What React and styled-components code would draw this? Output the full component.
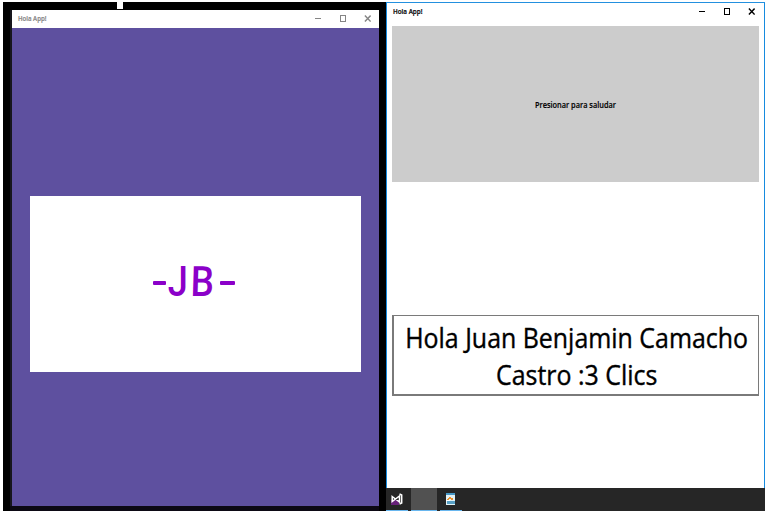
import React from "react";
import styled, { createGlobalStyle } from "styled-components";

const GlobalStyle = createGlobalStyle`
  * { box-sizing: border-box; }
  body { margin: 0; background: #fff; overflow: hidden; font-family: "Open Sans", "Noto Sans", sans-serif; }
  svg { display: block; }
`;

const Screen = styled.main`
  display: flex;
  width: 767px;
  height: 513px;
  padding: 2px 2px 2px 3px;
  background: #fff;
`;

const Desktop = styled.section`
  display: flex;
  flex-direction: column;
  width: 383px;
  height: 509px;
  padding-right: 7px;
  background: #000;
`;

const TopEdge = styled.div`
  flex: 0 0 8px;
  padding-left: 114px;
`;

const Handle = styled.div`
  width: 6px;
  height: 7px;
  background: #fff;
`;

const SplashWindow = styled.div`
  display: flex;
  flex-direction: column;
  flex: 0 0 496px;
  margin-left: 7px;
  border-left: 2px solid #17161d;
`;

const TitleBar = styled.header`
  display: flex;
  align-items: center;
  justify-content: space-between;
  flex: 0 0 ${(p) => p.$height}px;
  padding: 0 ${(p) => p.$right}px 0 ${(p) => p.$left}px;
  background: #fff;
  color: ${(p) => p.$color};
`;

const Label = styled.span`
  display: inline-block;
  font-size: ${(p) => p.$size}px;
  font-weight: ${(p) => p.$weight || 400};
  line-height: ${(p) => p.$line || 12}px;
  white-space: nowrap;
  -webkit-text-stroke: ${(p) => p.$stroke || 0}px currentColor;
  transform: scaleX(${(p) => p.$stretch});
  transform-origin: ${(p) => p.$origin || "left"};
`;

const WindowButtons = styled.div`
  display: flex;
  gap: 18px;
`;

const Splash = styled.div`
  flex: 1;
  padding: 168px 18px 0;
  background: #5e509f;
`;

const LogoCard = styled.div`
  display: flex;
  align-items: center;
  justify-content: center;
  height: 176px;
  padding: 0 3px 5px 0;
  background: #fff;
`;

const Logo = styled.div`
  display: flex;
  align-items: center;
  width: 82px;
  height: 40px;
  color: #8b00c9;
  font: 500 42px/40px "Roboto", sans-serif;
`;

const Letter = styled.span`
  flex: 0 0 ${(p) => p.$width}px;
  display: flex;
  justify-content: center;
  white-space: nowrap;
  transform: ${(p) => p.$shape || "none"};
`;

const Dash = styled.span`
  width: ${(p) => p.$width}px;
  height: 4px;
  margin: 3px 0 0 ${(p) => p.$before || 0}px;
  border-radius: 1px;
  background: currentColor;
`;

const DesktopFloor = styled.div`
  flex: 1;
  margin-left: 7px;
  background: #0c0914;
`;

const AppWindow = styled.section`
  display: flex;
  flex-direction: column;
  width: 379px;
  height: 509px;
  border-top: 1px solid #2390df;
  background: #fff;
`;

const AppBody = styled.div`
  display: flex;
  flex-direction: column;
  flex: 1;
  border: solid #168bdf;
  border-width: 0 1px;
`;

const Content = styled.div`
  display: flex;
  flex-direction: column;
  gap: 133px;
  padding: 5px 5px 0;
`;

const GreetButton = styled.button`
  display: flex;
  align-items: center;
  justify-content: center;
  height: 156px;
  padding: 1px 0 0;
  border: 0;
  background: #ccc;
  color: #000;
  font-family: inherit;
`;

const Greeting = styled.div`
  display: flex;
  flex-direction: column;
  align-items: center;
  height: 81px;
  padding: 3px 0 0 1px;
  border: 2px solid #7a7a7a;
  border-top-width: 1px;
  border-right-width: 1px;
  color: #000;
`;

const Taskbar = styled.footer`
  display: flex;
  flex: 0 0 23px;
  background: #262626;
`;

const Task = styled.div`
  display: flex;
  align-items: center;
  justify-content: center;
  width: ${(p) => p.$width}px;
  margin-right: ${(p) => p.$gap || 0}px;
  border-bottom: 1px solid #69b7ef;
  background: ${(p) => (p.$active ? "#515151" : "transparent")};
`;

function Controls() {
  return (
    <WindowButtons>
      <svg width="7" height="8" viewBox="0 0 7 8" shapeRendering="crispEdges"><path d="M1 3.5H7" stroke="currentColor" /></svg>
      <svg width="7" height="8" viewBox="0 0 7 8" shapeRendering="crispEdges"><path d="M1.5 .5H6.5V6.5H1.5Z" fill="none" stroke="currentColor" /></svg>
      <svg width="7" height="8" viewBox="0 0 7 8"><path d="M.9 .6 6.6 6.6M6.6 .6 .9 6.6" stroke="currentColor" strokeWidth="1.4" /></svg>
    </WindowButtons>
  );
}

function StudioIcon() {
  return (
    <svg width="12" height="12" viewBox="0 0 12 12">
      <path d="M0 7H8V12H0Z" fill="#68217a" />
      <path d="M1.2 3.5 8.5 9V3L1.2 8.5ZM8.5 1 10.7 2V10L8.5 11" fill="none" stroke="#fff" strokeWidth="1.5" />
    </svg>
  );
}

function DocumentIcon() {
  return (
    <svg width="10" height="12" viewBox="0 0 10 12" shapeRendering="crispEdges">
      <path d="M0 0H9V12H0Z" fill="#e3f1f5" />
      <path d="M0 0H9V2H0Z" fill="#4697c5" />
      <path d="M3 4H5V5H7V7H5V6H3V7H1V6H2V5H3Z" fill="#eb922e" />
      <path d="M1 8H9V11H1Z" fill="#579fc4" />
      <path d="M0 7H4V8H0Z" fill="#fff" />
    </svg>
  );
}

export default function App() {
  return (
    <>
      <GlobalStyle />
      <Screen>
        <Desktop>
          <TopEdge><Handle /></TopEdge>
          <SplashWindow>
            <TitleBar $height={18} $left={6} $right={8} $color="#858585">
              <Label $size={7} $weight={600} $stretch={0.87} $stroke={0.2}>Hola App!</Label>
              <Controls />
            </TitleBar>
            <Splash>
              <LogoCard>
                <Logo>
                  <Dash $width={15} />
                  <Letter $width={20} $shape="scaleX(.86)">J</Letter>
                  <Letter $width={26} $shape="translateX(-1px) scaleX(.88) skewX(-2deg)">B</Letter>
                  <Dash $width={17} $before={4} />
                </Logo>
              </LogoCard>
            </Splash>
          </SplashWindow>
          <DesktopFloor />
        </Desktop>
        <AppWindow>
          <AppBody>
            <TitleBar $height={18} $left={6} $right={9} $color="#000">
              <Label $size={7} $weight={600} $stretch={0.9} $stroke={0.2}>Hola App!</Label>
              <Controls />
            </TitleBar>
            <Content>
              <GreetButton>
                <Label $size={9} $weight={600} $stretch={0.82} $stroke={0.15} $origin="center">Presionar para saludar</Label>
              </GreetButton>
              <Greeting>
                <Label $size={28} $line={37} $stretch={0.89} $stroke={0.4} $origin="center">Hola Juan Benjamin Camacho</Label>
                <Label $size={28} $line={37} $stretch={0.89} $stroke={0.4} $origin="center">Castro :3 Clics</Label>
              </Greeting>
            </Content>
          </AppBody>
          <Taskbar>
            <Task $width={22} $gap={3}><StudioIcon /></Task>
            <Task $width={26} $gap={3} $active />
            <Task $width={22}><DocumentIcon /></Task>
          </Taskbar>
        </AppWindow>
      </Screen>
    </>
  );
}
